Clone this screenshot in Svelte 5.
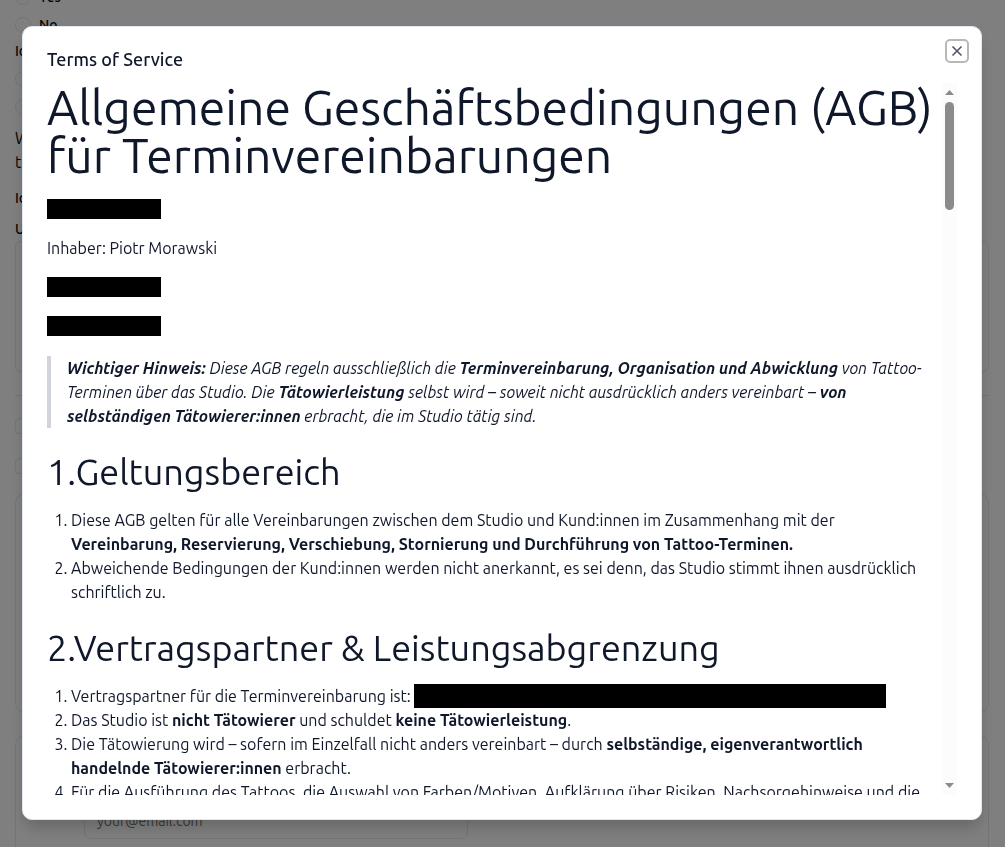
<script lang="ts">
	type Part = string | { b: string } | { redacted: true } | { br: true };

	const br: Part = { br: true };

	const hint: Part[] = [
		{ b: 'Wichtiger Hinweis:' },
		' Diese AGB regeln ausschließlich die ',
		{ b: 'Terminvereinbarung, Organisation und Abwicklung' },
		' von Tattoo-',
		br,
		'Terminen über das Studio. Die ',
		{ b: 'Tätowierleistung' },
		' selbst wird – soweit nicht ausdrücklich anders vereinbart – ',
		{ b: 'von' },
		br,
		{ b: 'selbständigen Tätowierer:innen' },
		' erbracht, die im Studio tätig sind.'
	];

	const sections: { title: string; items: Part[][] }[] = [
		{
			title: '1.Geltungsbereich',
			items: [
				[
					'Diese AGB gelten für alle Vereinbarungen zwischen dem Studio und Kund:innen im Zusammenhang mit der',
					br,
					{ b: 'Vereinbarung, Reservierung, Verschiebung, Stornierung und Durchführung von Tattoo-Terminen.' }
				],
				[
					'Abweichende Bedingungen der Kund:innen werden nicht anerkannt, es sei denn, das Studio stimmt ihnen ausdrücklich',
					br,
					'schriftlich zu.'
				]
			]
		},
		{
			title: '2.Vertragspartner & Leistungsabgrenzung',
			items: [
				['Vertragspartner für die Terminvereinbarung ist: ', { redacted: true }],
				[
					'Das Studio ist ',
					{ b: 'nicht Tätowierer' },
					' und schuldet ',
					{ b: 'keine Tätowierleistung' },
					'.'
				],
				[
					'Die Tätowierung wird – sofern im Einzelfall nicht anders vereinbart – durch ',
					{ b: 'selbständige, eigenverantwortlich' },
					br,
					{ b: 'handelnde Tätowierer:innen' },
					' erbracht.'
				],
				[
					'Für die Ausführung des Tattoos, die Auswahl von Farben/Motiven, Aufklärung über Risiken, Nachsorgehinweise und die'
				]
			]
		}
	];

	let open = $state(true);
	let body = $state<HTMLDivElement>();

	function scrollBody(amount: number) {
		body?.scrollBy({ top: amount, behavior: 'smooth' });
	}
</script>

{#snippet rich(parts: Part[])}
	{#each parts as part}
		{#if typeof part === 'string'}{part}{:else if 'b' in part}<strong>{part.b}</strong
			>{:else if 'br' in part}<br />{:else}<span class="redacted wide"></span>{/if}
	{/each}
{/snippet}

<main class="page">
	<form>
		<label class="choice"><input type="radio" name="first" /> Yes</label>
		<label class="choice"><input type="radio" name="first" /> No</label>
		<p class="question">Ic</p>
		<label class="choice"><input type="radio" name="second" aria-label="Yes" /></label>
		<label class="choice"><input type="radio" name="second" aria-label="No" /></label>
		<p class="note">W<br />t</p>
		<p class="question spaced">Ic</p>
		<label class="question" for="signature">U</label>
		<textarea id="signature"></textarea>
		<hr />
		<input class="check" type="checkbox" aria-label="Terms" />
		<input class="check" type="checkbox" aria-label="Privacy" />
		<section class="card tall"></section>
		<section class="card">
			<input class="email" type="email" placeholder="your@email.com" aria-label="Email" />
		</section>
	</form>
</main>

{#if open}
	<div class="overlay">
		<div class="dialog" role="dialog" aria-modal="true" aria-labelledby="dialog-title">
			<h2 id="dialog-title">Terms of Service</h2>

			<div class="viewport">
				<div class="content" bind:this={body}>
					<h1>Allgemeine Geschäftsbedingungen (AGB)<br />für Terminvereinbarungen</h1>
					<p><span class="redacted"></span></p>
					<p>Inhaber: Piotr Morawski</p>
					<p><span class="redacted"></span></p>
					<p><span class="redacted"></span></p>
					<blockquote>{@render rich(hint)}</blockquote>

					{#each sections as section}
						<h3>{section.title}</h3>
						<ol>
							{#each section.items as item}
								<li>{@render rich(item)}</li>
							{/each}
						</ol>
					{/each}
				</div>

				<div class="scrollbar">
					<button type="button" aria-label="Scroll up" onclick={() => scrollBody(-48)}>
						<svg width="9" height="5" viewBox="0 0 9 5"><path d="M4.500 0 9 5H0z" /></svg>
					</button>
					<div class="track"><div class="thumb"></div></div>
					<button type="button" aria-label="Scroll down" onclick={() => scrollBody(48)}>
						<svg width="9" height="5" viewBox="0 0 9 5"><path d="M0 0h9L4.500 5z" /></svg>
					</button>
				</div>
			</div>

			<button class="close" type="button" aria-label="Close" onclick={() => (open = false)}>
				<svg width="16" height="16" viewBox="0 0 16 16"><path d="m3.500 3.500 9 9M12.500 3.500l-9 9" /></svg>
			</button>
		</div>
	</div>
{/if}

<style>
	:global(body) {
		background: #fff;
	}

	.page,
	.overlay {
		font-family: Ubuntu, 'Open Sans', 'Noto Sans', sans-serif;
		font-size: 16px;
		font-weight: 400;
		line-height: 24px;
		color: #0f172a;
	}

	.page {
		height: 100vh;
		overflow: hidden;
		color: #0a0a0a;
	}

	form {
		display: flex;
		flex-direction: column;
		margin: -17px 16px 0 15px;
	}

	.choice {
		display: flex;
		align-items: center;
		gap: 8px;
		height: 28px;
		font-size: 14px;
		font-weight: 500;
	}

	.choice input,
	.check {
		appearance: none;
		box-sizing: border-box;
		width: 16px;
		height: 16px;
		margin: 0;
		border: 1px solid #e2e8f0;
		border-radius: 50%;
	}

	.check {
		margin-bottom: 24px;
		border-radius: 4px;
	}

	p.question,
	label.question {
		margin: 0;
		font-size: 14px;
		font-weight: 500;
	}

	p.question {
		height: 26px;
	}

	p.question.spaced {
		height: 31px;
		margin-top: 12px;
	}

	.note {
		margin: 5px 0 0;
	}

	textarea {
		box-sizing: border-box;
		height: 131px;
		border: 1px solid #e2e8f0;
		border-radius: 6px;
		resize: none;
	}

	hr {
		width: 100%;
		margin: 23px 0 22px;
		border: 0;
		border-top: 1px solid #e2e8f0;
	}

	.card {
		box-sizing: border-box;
		height: 222px;
		margin-bottom: 20px;
		padding: 68px;
		border: 1px solid #e2e8f0;
		border-radius: 12px;
	}

	.card.tall {
		margin-top: -6px;
	}

	.email {
		box-sizing: border-box;
		width: 384px;
		height: 36px;
		padding: 0 12px;
		border: 1px solid #e2e8f0;
		border-radius: 6px;
		font: inherit;
		font-size: 14px;
	}

	.email::placeholder {
		color: #737373;
	}

	.overlay {
		position: fixed;
		inset: 0;
		display: flex;
		align-items: flex-start;
		justify-content: center;
		padding: 26px 17px 27px 16px;
		background: rgb(0 0 0 / 50%);
	}

	.dialog {
		position: relative;
		box-sizing: border-box;
		display: flex;
		flex-direction: column;
		gap: 15px;
		width: 100%;
		max-width: 960px;
		height: 100%;
		padding: 23px 24px 24px;
		background: #fff;
		border: 1px solid #e2e8f0;
		border-radius: 10px;
		box-shadow: 0 10px 16px -3px rgb(0 0 0 / 20%);
	}

	.overlay,
	.viewport {
		box-sizing: border-box;
	}

	#dialog-title {
		margin: 0;
		font-size: 18px;
		font-weight: 500;
		line-height: 18px;
	}

	.viewport {
		display: flex;
		flex: 1;
		min-height: 0;
	}

	.content {
		flex: 1;
		min-width: 0;
		overflow: hidden auto;
		scrollbar-width: none;
		white-space: nowrap;
	}

	h1 {
		margin: 0 0 18px;
		font-size: 48px;
		font-weight: 400;
		line-height: 48px;
	}

	.content p {
		display: flex;
		align-items: center;
		height: 24px;
		margin: 0 0 15px;
	}

	.redacted {
		display: inline-block;
		width: 114px;
		height: 20px;
		background: #000;
	}

	.redacted.wide {
		width: 472px;
		height: 24px;
		vertical-align: top;
	}

	blockquote {
		margin: 18px 0 0;
		padding-left: 16px;
		border-left: 4px solid #d1d5db;
		font-style: italic;
	}

	strong {
		font-weight: 600;
	}

	h3 {
		margin: 24px 0 16px;
		font-size: 36px;
		font-weight: 400;
		line-height: 40px;
	}

	ol {
		margin: 0;
		padding-left: 24px;
	}

	.scrollbar {
		display: flex;
		flex-direction: column;
		width: 15px;
		background: #fcfcfc;
	}

	.scrollbar button {
		display: flex;
		align-items: center;
		justify-content: center;
		height: 19px;
		padding: 0;
		background: none;
		border: 0;
	}

	.scrollbar svg {
		fill: #8b8b8b;
	}

	.track {
		flex: 1;
	}

	.thumb {
		width: 9px;
		height: 16%;
		margin: 0 auto;
		background: #8b8b8b;
		border-radius: 5px;
	}

	.close {
		position: absolute;
		top: 12px;
		right: 12px;
		display: flex;
		align-items: center;
		justify-content: center;
		width: 24px;
		height: 24px;
		padding: 0;
		background: #fff;
		border: 2px solid #b8b8b8;
		border-radius: 5px;
	}

	.close svg {
		flex: none;
		fill: none;
		stroke: #4a5068;
		stroke-width: 1.5;
	}
</style>
